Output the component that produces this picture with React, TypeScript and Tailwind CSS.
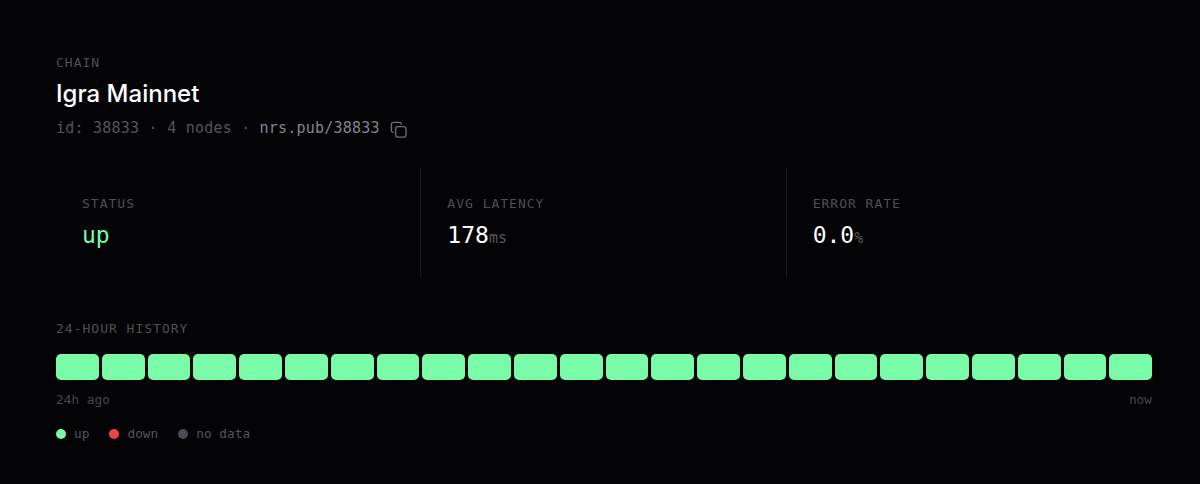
const mono = 'font-["DejaVu_Sans_Mono","Liberation_Mono",monospace]';

const stats = [
  { label: 'STATUS', value: 'up', unit: '', color: 'text-[#7afba8]' },
  { label: 'AVG LATENCY', value: '178', unit: 'ms', color: 'text-white' },
  { label: 'ERROR RATE', value: '0.0', unit: '%', color: 'text-white' },
];

const legend = [
  { label: 'up', color: 'bg-[#7afba8]' },
  { label: 'down', color: 'bg-[#ef4444]' },
  { label: 'no data', color: 'bg-[#4a4a52]' },
];

const hours = Array.from({ length: 24 }, (_, i) => i);

function CopyIcon() {
  return (
    <svg width="17" height="17" viewBox="0 0 18 18" fill="none" stroke="#6e6e72" strokeWidth="1.4" strokeLinecap="round" strokeLinejoin="round">
      <rect x="6" y="6" width="11" height="11" rx="2.5" />
      <path d="M3.5 12 C2.2 12 1.5 11.2 1.5 10 V3.5 C1.5 2.2 2.2 1.5 3.5 1.5 H10 C11.2 1.5 12 2.2 12 3.5" />
    </svg>
  );
}

export default function App() {
  return (
    <div className={`h-[484px] w-[1200px] overflow-hidden bg-[#040406] pl-14 pr-12 pt-[56px] ${mono}`}>
      <div className="text-[13px] leading-[14px] tracking-[1px] text-[#4f4f54]">CHAIN</div>
      <h1 className='mt-[8px] font-["Inter",sans-serif] text-2xl leading-[32px] font-medium text-white'>Igra Mainnet</h1>
      <div className="mt-[8px] flex h-[20px] items-center text-[15px] tracking-[0.23px] text-[#55555a]">
        <span>id: 38833 · 4 nodes · </span>
        <span className="ml-[9px] text-[#85858a]">nrs.pub/38833</span>
        <span className="ml-[10px] mt-[2px]"><CopyIcon /></span>
      </div>

      <div className="mt-[30px] grid h-[110px] grid-cols-3">
        {stats.map((s, i) => (
          <div key={s.label} className={`pl-[26px] pt-[29px] ${i < 2 ? 'border-r border-[#17171b]' : ''}`}>
            <div className="text-[13px] leading-[14px] tracking-[1px] text-[#4f4f54]">{s.label}</div>
            <div className="mt-[10px] flex items-baseline leading-[28px]">
              <span className={`text-[23px] ${s.color}`}>{s.value}</span>
              {s.unit && <span className="text-[15px] text-[#55555a]">{s.unit}</span>}
            </div>
          </div>
        ))}
      </div>

      <div className="mt-[44px] text-[13px] leading-[14px] tracking-[1px] text-[#4f4f54]">24-HOUR HISTORY</div>
      <div className="mt-[18px] flex gap-[3px]">
        {hours.map((h) => (
          <div key={h} className="h-[26px] flex-1 rounded-[5px] bg-[#7afba8]" />
        ))}
      </div>
      <div className="mt-[12px] flex justify-between text-[12.8px] leading-[16px] text-[#47474c]">
        <span>24h ago</span>
        <span>now</span>
      </div>
      <div className="mt-[18px] flex gap-[20px] text-[12.8px] leading-[16px] text-[#55555a]">
        {legend.map((l) => (
          <div key={l.label} className="flex items-center gap-[8px]">
            <span className={`h-[10px] w-[10px] rounded-full ${l.color}`} />
            <span>{l.label}</span>
          </div>
        ))}
      </div>
    </div>
  );
}
